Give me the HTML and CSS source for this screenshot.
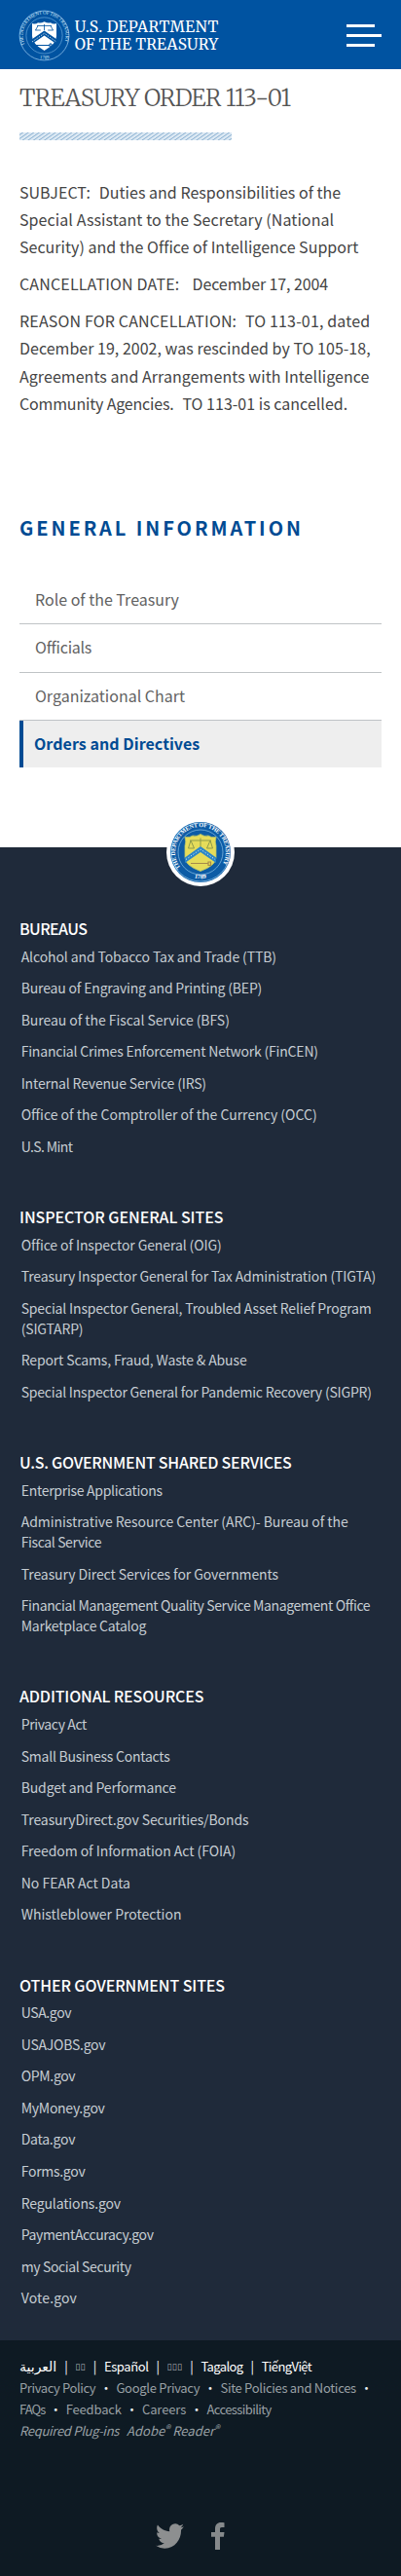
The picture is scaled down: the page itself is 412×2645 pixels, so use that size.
FILE: index.html
```
<!DOCTYPE html>
<html lang="en">
<head>
<meta charset="utf-8">
<title>Treasury Order 113-01</title>
<link rel="stylesheet" href="styles.css">
</head>
<body>
<header class="site-header">
  <svg class="logo" width="210" height="60" viewBox="15 5 210 60" role="img" aria-label="U.S. Department of the Treasury">
    <defs>
      <path id="arc-top" d="M25.600 45 A22 22 0 1 1 65.400 45"/>
      <path id="arc-low" d="M35 57.200 A24 24 0 0 0 56 57.200"/>
    </defs>
    <circle cx="45.500" cy="35.500" r="25.400" fill="none" stroke="#8fc0ea" stroke-width=".8"/>
    <circle cx="45.500" cy="35.500" r="18.600" fill="none" stroke="#6fa9dd" stroke-width=".7"/>
    <text class="seal-text" fill="#d3e9fb"><textPath href="#arc-top" textLength="85">THE DEPARTMENT OF THE TREASURY</textPath></text>
    <text class="seal-text" fill="#d3e9fb"><textPath href="#arc-low" startOffset="6">1789</textPath></text>
    <path d="M33 23 q4 1.500 6-.8 q3 1 6.500-1 q3.500 2 6.500 1 q2 2.300 6 .8 v13 q0 8-12.500 15 q-12.500-7-12.500-15z" fill="#fff"/>
    <path d="M38 25.500 h15 M36.200 30 h5.600 M49.200 30 h5.600 M39 25.500 l-2.500 4.500 M52 25.500 l2.500 4.500 M45.500 24 v6" stroke="#0053a1" stroke-width=".8" fill="none"/>
    <path d="M32.500 39.500 L45.500 30.500 L58.500 39.500 V44.500 L45.500 35.500 L32.500 44.500z" fill="#0053a1"/>
    <path d="M33 42 L45.500 33.200 L58 42" fill="none" stroke="#fff" stroke-width=".9" stroke-dasharray="1 1.200"/>
    <path d="M37 45.500 H51 M51 44 v3 h2 v-3z" stroke="#0053a1" stroke-width="1" fill="none"/>
    <text class="logo-text" x="76.800" y="31.600" textLength="147.500">U.S. DEPARTMENT</text>
    <text class="logo-text" x="76.800" y="50" textLength="147.500">OF THE TREASURY</text>
  </svg>
  <button class="menu" aria-label="Menu"><span class="bar short"></span><span class="bar"></span><span class="bar short"></span></button>
</header>
<main class="content">
  <h1 class="title">TREASURY ORDER 113-01</h1>
  <div class="hatch"></div>
  <div class="article">
    <p>SUBJECT:<span class="gap">&nbsp; </span>Duties and Responsibilities of the<br><span class="w08">Special Assistant to the Secretary (National</span><br>Security) and the Office of Intelligence Support</p>
    <p><span class="w15">CANCELLATION DATE:</span><span class="gap">&nbsp;&nbsp; </span><span class="n10">December 17, 2004</span></p>
    <p><span class="w15">REASON FOR CANCELLATION:<span class="gap">&nbsp; </span>TO 113-01, dated</span><br>December 19, 2002, was rescinded by TO 105-18,<br><span class="w06">Agreements and Arrangements with Intelligence</span><br><span class="n17">Community Agencies.</span><span class="gap">&nbsp; </span>TO 113-01 is cancelled.</p>
  </div>
  <h2 class="section-title">GENERAL INFORMATION</h2>
  <nav class="side-nav">
    <a>Role of the Treasury</a>
    <a class="n24">Officials</a>
    <a>Organizational Chart</a>
    <a class="active">Orders and Directives</a>
  </nav>
</main>
<footer class="footer">
  <svg class="seal" width="70" height="70" viewBox="0 0 70 70" role="img" aria-label="Treasury seal">
    <defs>
      <path id="ring-top" d="M14.500 51 A26 26 0 1 1 55.500 51"/>
      <path id="ring-low" d="M24 60 A29 29 0 0 0 46 60"/>
    </defs>
    <circle cx="35" cy="35" r="35" fill="#fff"/>
    <circle cx="35" cy="35" r="31" fill="#0d5ca6"/>
    <circle cx="35" cy="35" r="30" fill="none" stroke="#8cc3e6" stroke-width=".7"/>
    <circle cx="35" cy="35" r="23" fill="none" stroke="#8cc3e6" stroke-width=".7"/>
    <text class="ring-text" fill="#fff"><textPath href="#ring-top" textLength="111">THE DEPARTMENT OF THE TREASURY</textPath></text>
    <text class="ring-text" fill="#fff"><textPath href="#ring-low" startOffset="5">1789</textPath></text>
    <path d="M19 19.500 q5 1 8-1.500 q4 1.500 8-1.500 q4 3 8 1.500 q3 2.500 8 1.500 q-1.500 5 0 9 v12 q0 8-16 14 q-16-6-16-14 v-12 q1.500-4 0-9z" fill="#e5dc5a" stroke="#b9c568" stroke-width=".8"/>
    <path d="M24 23 H46 M35 20.500 V29 M25 23 l-2.500 8 h6z M45 23 l-3.500 8 h6z" fill="none" stroke="#8d9a4a" stroke-width="1"/>
    <path d="M19 40.500 L35 29 L51 40.500 V46 L35 35 L19 46z" fill="#2c86c8"/>
    <path d="M20 42.500 L35 32 L50 42.500" fill="none" stroke="#d8ecf2" stroke-width="1" stroke-dasharray="1.200 1.800"/>
    <path d="M25 46.500 H43 M43 45 v3.500 h2.500 v-3.500z" stroke="#a58a4a" stroke-width="1.200" fill="none"/>
  </svg>
  <section class="group"><h3 class="n60">BUREAUS</h3><ul>
    <li>Alcohol and Tobacco Tax and Trade (TTB)</li><li class="n17">Bureau of Engraving and Printing (BEP)</li><li class="n06">Bureau of the Fiscal Service (BFS)</li><li class="n20">Financial Crimes Enforcement Network (FinCEN)</li><li class="n17">Internal Revenue Service (IRS)</li><li class="n00">Office of the Comptroller of the Currency (OCC)</li><li class="n60">U.S. Mint</li></ul></section>
  <section class="group"><h3 class="n06">INSPECTOR GENERAL SITES</h3><ul>
    <li class="n10">Office of Inspector General (OIG)</li><li class="n14">Treasury Inspector General for Tax Administration (TIGTA)</li><li class="n17">Special Inspector General, Troubled Asset Relief Program<br>(SIGTARP)</li><li class="n14">Report Scams, Fraud, Waste &amp; Abuse</li><li class="n20">Special Inspector General for Pandemic Recovery (SIGPR)</li></ul></section>
  <section class="group"><h3 class="n24">U.S. GOVERNMENT SHARED SERVICES</h3><ul>
    <li class="n28">Enterprise Applications</li><li class="n06">Administrative Resource Center (ARC)- Bureau of the<br><span class="n38">Fiscal Service</span></li><li class="n10">Treasury Direct Services for Governments</li><li class="n38">Financial Management Quality Service Management Office<br><span class="n24">Marketplace Catalog</span></li></ul></section>
  <section class="group"><h3 class="n14">ADDITIONAL RESOURCES</h3><ul>
    <li class="n38">Privacy Act</li><li class="n24">Small Business Contacts</li><li class="n14">Budget and Performance</li><li class="n10">TreasuryDirect.gov Securities/Bonds</li><li class="n06">Freedom of Information Act (FOIA)</li><li class="n00">No FEAR Act Data</li><li class="n00">Whistleblower Protection</li></ul></section>
  <section class="group"><h3 class="n10">OTHER GOVERNMENT SITES</h3><ul>
    <li class="n38">USA.gov</li><li class="n24">USAJOBS.gov</li><li class="n33">OPM.gov</li><li class="n28">MyMoney.gov</li><li class="n24">Data.gov</li><li class="n28">Forms.gov</li><li class="n14">Regulations.gov</li><li class="n38">PaymentAccuracy.gov</li><li class="n38">my Social Security</li><li class="w15">Vote.gov</li></ul></section>
</footer>
<div class="legal">
  <div class="row langs"><bdi class="arabic">العربية</bdi><i>|</i><span class="tofu">▯▯</span><i>|</i><span class="n42">Español</span><i>|</i><span class="tofu">▯▯▯</span><i>|</i><span class="n60">Tagalog</span><i>|</i><span class="n60">TiếngViệt</span></div>
  <div class="row"><span class="n38">Privacy Policy</span><i>•</i><span>Google Privacy</span><i>•</i><span>Site Policies and Notices</span><i>•</i></div>
  <div class="row"><span class="n90">FAQs</span><i>•</i><span class="n17">Feedback</span><i>•</i><span class="n10">Careers</span><i>•</i><span class="n60">Accessibility</span></div>
  <div class="row plugins"><span>Required Plug-ins</span><span class="n00">Adobe<sup>®</sup> Reader<sup>®</sup></span></div>
  <div class="social">
    <svg class="twitter" width="29" height="26" viewBox="0 2 24 20" preserveAspectRatio="none" fill="#8d8f90"><path d="M23.950 4.570a10 10 0 0 1-2.820.770 4.960 4.960 0 0 0 2.160-2.720c-.950.550-2 .950-3.130 1.180a4.920 4.920 0 0 0-8.380 4.480C7.690 8.090 4.070 6.130 1.640 3.160a4.820 4.820 0 0 0-.670 2.480c0 1.710.870 3.210 2.190 4.100a4.900 4.900 0 0 1-2.230-.620v.060a4.920 4.920 0 0 0 3.950 4.830 5 5 0 0 1-2.210.080 4.940 4.940 0 0 0 4.600 3.420A9.870 9.870 0 0 1 0 19.540a14 14 0 0 0 7.550 2.210c9.050 0 14-7.500 14-13.980 0-.210 0-.420-.020-.630a9.940 9.940 0 0 0 2.420-2.570z"/></svg>
    <svg class="facebook" width="14" height="28" viewBox="0 0 14 28" fill="#85898b"><path d="M13.500 .3V5H11C9.400 5 9 5.800 9 7V10H13.500L12.900 14.700H9V28H4V14.700H0V10H4V6.500C4 2.400 6.400 .1 10 .1C11.700 .1 13 .2 13.500 .3z"/></svg>
  </div>
</div>
</body>
</html>
```
FILE: styles.css
```
* { box-sizing: border-box; }
body { margin: 0; background: #fff; color: #444; font-family: "Noto Sans CJK SC", "Noto Sans", sans-serif; }
h1, h2, h3, p, ul { margin: 0; padding: 0; }
ul { list-style: none; }

.site-header { display: flex; justify-content: space-between; align-items: center; height: 71px; padding: 0 20px 0 15px; background: #0053a1; }
.logo { display: block; overflow: visible; }
.logo-text { font: 15.500px Merriweather, "Noto Serif", serif; fill: #fff; }
.seal-text { font: 5px "Liberation Serif", serif; }
.ring-text { font: bold 6.200px "Liberation Serif", serif; }
.menu { display: flex; flex-direction: column; gap: 7px; width: 36px; margin: 2px 0 0; padding: 0; border: 0; background: none; }
.bar { width: 36px; height: 3px; background: #fff; }
.bar.short { width: 29px; }

.content { padding: 15px 20px 0; height: 799px; }
.title { height: 50px; color: #555; font: 300 24px/30px Merriweather, "Noto Serif", serif; letter-spacing: -.6px; white-space: nowrap; }
.hatch { width: 218px; height: 8px; background: repeating-linear-gradient(145deg, #dbe8f3 0 1.300px, #94b7d5 1.900px 2.200px, #dbe8f3 2.900px 3.200px); }
.article { padding-top: 39px; font-size: 16px; line-height: 28.200px; letter-spacing: .02px; white-space: nowrap; }
.article p { margin-bottom: 9.700px; }
.gap { letter-spacing: .8px; }
.section-title { margin-top: 99px; color: #004b93; font-size: 20px; font-weight: 700; line-height: 30px; letter-spacing: 2.930px; white-space: nowrap; }
.side-nav { margin-top: 35px; display: flex; flex-direction: column; }
.side-nav a { height: 49.330px; padding-left: 16px; border-bottom: 1px solid #bfc3c6; color: #626262; font-size: 16px; line-height: 47px; }
.side-nav .active { height: 48px; padding-left: 11px; border-bottom: 0; border-left: 4px solid #004b93; background: #eee; color: #004b93; font-weight: 700; letter-spacing: .05px; }

.footer { position: relative; height: 1533px; padding: 71px 20px 0; background: #1f2a3a; color: #c6cdd3; }
.seal { position: absolute; top: -30px; left: 171px; }
.group { margin-bottom: 49.700px; white-space: nowrap; }
.group h3 { height: 30.500px; color: #fff; font-size: 16px; font-weight: 500; line-height: 24px; }
.group ul { display: flex; flex-direction: column; gap: 11.750px; padding-left: 1.700px; letter-spacing: -.11px; }
.group li { font-size: 14px; line-height: 20.800px; }

.legal { height: 242px; padding: 16px 20px 0; background: #0e1a23; color: #99a0a5; font-size: 13px; line-height: 22px; letter-spacing: -.3px; }
.row { display: flex; height: 22px; white-space: nowrap; }
.row i { width: 21.200px; color: #e8ecee; font-style: normal; text-align: center; }
.langs, .langs i { color: #fff; }
.langs i { width: 19.100px; }
.arabic { font: 14px/22px "DejaVu Sans", sans-serif; letter-spacing: 0; }
.tofu { color: #aeb4b8; font: 9px/22px "DejaVu Sans", sans-serif; letter-spacing: .3px; }
.plugins { gap: 8px; font-style: italic; }
.plugins sup { font-size: 11px; line-height: 0; vertical-align: 3px; }
.social { display: flex; gap: 28px; align-items: center; padding: 83px 0 0 140px; }

/* letter tracking: n = narrower, w = wider, in hundredths of a pixel */
.w15 { letter-spacing: .15px; }
.w08 { letter-spacing: .08px; }
.w06 { letter-spacing: .06px; }
.n00 { letter-spacing: 0; }
.n06 { letter-spacing: -.06px; }
.n10 { letter-spacing: -.1px; }
.n14 { letter-spacing: -.14px; }
.n17 { letter-spacing: -.17px; }
.n20 { letter-spacing: -.2px; }
.n24 { letter-spacing: -.24px; }
.n28 { letter-spacing: -.28px; }
.n33 { letter-spacing: -.33px; }
.n38 { letter-spacing: -.38px; }
.n42 { letter-spacing: -.42px; }
.n60 { letter-spacing: -.6px; }
.n90 { letter-spacing: -.9px; }
```
